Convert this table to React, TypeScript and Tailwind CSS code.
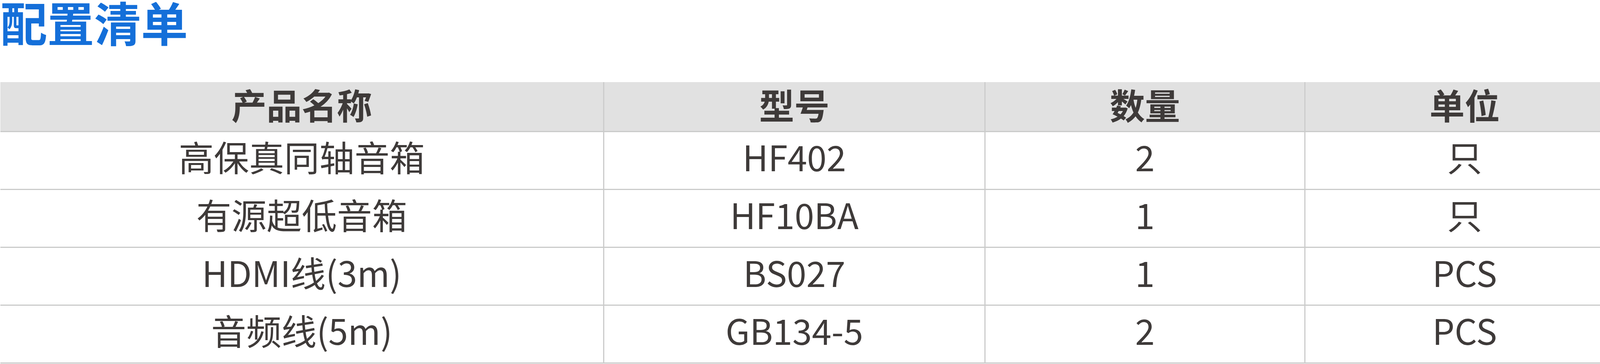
const rows = [
  { name: "高保真同轴音箱", model: "HF402", qty: "2", unit: "只" },
  { name: "有源超低音箱", model: "HF10BA", qty: "1", unit: "只" },
  { name: "HDMI线(3m)", model: "BS027", qty: "1", unit: "PCS" },
  { name: "音频线(5m)", model: "GB134-5", qty: "2", unit: "PCS" },
];

const headers = ["产品名称", "型号", "数量", "单位"];

const colClass = [
  "w-[1543px]",
  "w-[976px] border-l-[3px] border-[#cccccc]",
  "w-[819px] border-l-[3px] border-[#cccccc]",
  "w-[818px] border-l-[3px] border-[#cccccc]",
];

export default function App() {
  return (
    <div className="h-[931px] w-[4158px] bg-white font-['Noto_Sans_CJK_SC',sans-serif] text-[#3e3a39]">
      <div className="h-[210px]">
        <h1 className="text-[120px] leading-[110px] font-bold text-[#146fd9] pl-[1px]">配置清单</h1>
      </div>
      <div className="px-[1px]">
        <div className="flex h-[128px] border-b-[3px] border-[#cacbca] bg-[#e1e1e1]">
          {headers.map((h, i) => (
            <div
              key={h}
              className={`${colClass[i]} flex items-center justify-center pb-[14px] text-[90px] font-bold leading-none`}
            >
              {h}
            </div>
          ))}
        </div>
        {rows.map((r) => (
          <div key={r.name} className="flex h-[148px] border-b-[3px] border-[#cacbca]">
            {[r.name, r.model, r.qty, r.unit].map((v, i) => (
              <div
                key={i}
                className={`${colClass[i]} flex items-center justify-center pb-[24px] text-[90px] leading-none`}
              >
                {v}
              </div>
            ))}
          </div>
        ))}
      </div>
    </div>
  );
}
